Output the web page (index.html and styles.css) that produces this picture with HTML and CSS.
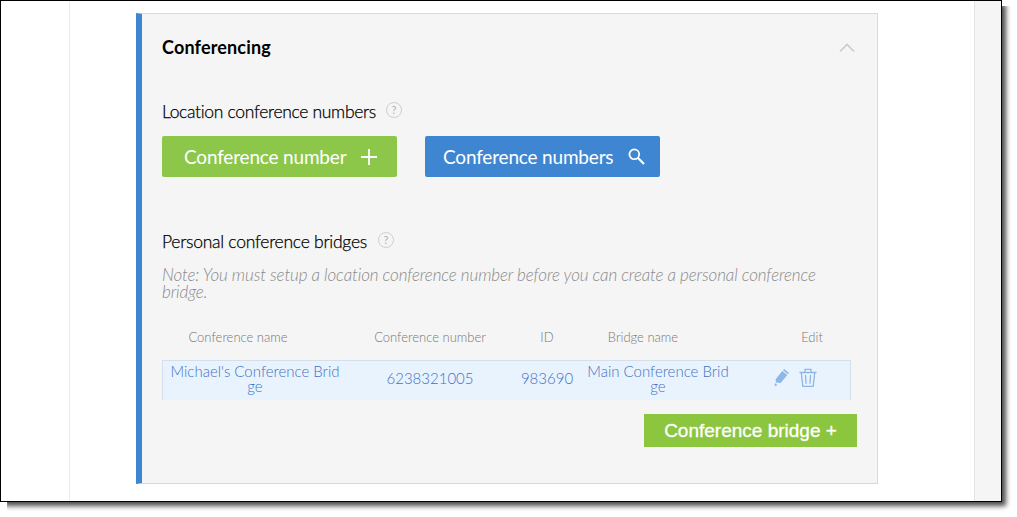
FILE: index.html
```html
<!DOCTYPE html>
<html lang="en">
<head>
<meta charset="utf-8">
<title>Conferencing</title>
<link rel="stylesheet" href="styles.css">
</head>
<body>
<div class="frame">
  <main class="page">
    <section class="card">
      <header class="card-header">
        <h1 class="card-title">Conferencing</h1>
        <svg class="chevron" width="16" height="10" viewBox="0 0 16 10" fill="none" stroke="#cbcbcb" stroke-width="1.6"><path d="M1 8.5 8 1.5 15 8.5"/></svg>
      </header>
      <div class="label-row location-label">
        <h2 class="label">Location conference numbers</h2>
        <span class="help">?</span>
      </div>
      <div class="buttons">
        <button class="btn btn-green"><span class="btn-text">Conference number</span><svg width="16" height="16" viewBox="0 0 16 16" stroke="#fff" stroke-width="1.8"><path d="M8 0V16M0 8H16"/></svg></button>
        <button class="btn btn-blue"><span class="btn-text">Conference numbers</span><svg width="17" height="17" viewBox="0 0 17 17" fill="none" stroke="#fff" stroke-width="1.8"><circle cx="6.3" cy="6.3" r="4.9"/><path d="M9.8 9.8 16 16" stroke-width="2.2"/></svg></button>
      </div>
      <div class="label-row personal-label">
        <h2 class="label">Personal conference bridges</h2>
        <span class="help">?</span>
      </div>
      <p class="note">Note: You must setup a location conference number before you can create a personal conference<br>bridge.</p>
      <div class="row head">
        <span>Conference name</span><span>Conference number</span><span>ID</span><span>Bridge name</span><span>Edit</span>
      </div>
      <div class="row data">
        <span class="name">Michael's Conference Brid<br>ge</span>
        <span class="number">6238321005</span>
        <span class="number">983690</span>
        <span class="name">Main Conference Brid<br>ge</span>
        <span class="actions">
          <svg width="16" height="20" viewBox="0 0 16 20" fill="#8cb7e6"><path d="M9 2.2 10.1.9 15 4.9 14 6.2ZM8.3 3.1 13.3 7.1 6.7 15.1 1.9 14.6 1.6 11.3ZM.5 16.2 1.1 15.3 3.4 17 1 18.2Z"/></svg>
          <svg width="18" height="20" viewBox="0 0 18 20" fill="none" stroke="#8cb7e6" stroke-width="1.3"><path d="M.5 4.5H17.5M6 4.3V1.3H12V4.3M2.3 4.5 3.8 18.3H14.2L15.7 4.5M6.5 7 7 15.8M11.5 7 11 15.8"/></svg>
        </span>
      </div>
      <div class="footer"><button class="bridge-btn">Conference bridge +</button></div>
    </section>
  </main>
</div>
</body>
</html>
```
FILE: styles.css
```css
* { box-sizing: border-box; }
html { background: #fff; }
body { margin: 0; height: 517px; width: 1017px; overflow: clip; font-family: Lato, sans-serif; }
.frame {
  width: 1002px; height: 502px; border: 1px solid #000;
  background: #f5f5f5;
  box-shadow: 4px 4px 5px 0 rgba(0,0,0,.7);
  clip-path: polygon(0 0, 1002px 0, 1002px 6px, 1017px 6px, 1017px 517px, 7px 517px, 7px 502px, 0 502px);
}
.page {
  width: 974px; height: 500px; padding: 12px 0 0 135px;
  background: linear-gradient(#ebebeb, #ebebeb) 68px 0 / 1px 100% no-repeat #fff;
  border-right: 1px solid #e3e3e3;
}
.card {
  width: 742px; height: 471px; background: #f5f5f5;
  border: 1px solid #d9d9d9; border-left: 6px solid #3f86d2;
  padding: 0 20px;
}
.card-header { display: flex; justify-content: space-between; align-items: center; height: 66px; padding-right: 2px; }
.card-title { margin: 0; font-size: 18px; font-weight: 700; line-height: 22px; letter-spacing: .16px; color: #000; }
.chevron { margin-top: 2px; }
.label-row { display: flex; gap: 10px; height: 22px; }
.location-label { margin-top: 21px; }
.label { margin: 0; font-size: 17.5px; font-weight: 300; line-height: 21px; color: #000; -webkit-text-stroke: .25px #000; white-space: nowrap; }
.location-label .label { width: 214px; letter-spacing: -.32px; }
.personal-label .label { width: 206px; letter-spacing: -.26px; }
.help {
  width: 16px; height: 16px; border: 1px solid #cfcfcf; border-radius: 50%;
  font-size: 11px; line-height: 14px; text-align: center; color: #b0b0b0; margin-top: 1px;
}
.buttons { display: flex; gap: 28px; margin-top: 13px; }
.btn {
  width: 235px; height: 41px; border: 0; border-radius: 2px; color: #fff;
  display: flex; align-items: center; font: 400 19px/24px Lato, sans-serif; letter-spacing: -.18px; padding: 0;
}
.btn-green { background: #8cc74a; padding-left: 22px; gap: 15px; }
.btn-blue { background: #3f86d2; padding-left: 18px; gap: 15px; }
.btn-text { white-space: nowrap; }
.personal-label { margin-top: 54px; }
.note { margin: 13px 0 0; font-size: 17px; font-style: italic; font-weight: 300; line-height: 17px; letter-spacing: -.12px; color: #8a8a8a; white-space: nowrap; }
.row { width: 689px; display: grid; grid-template-columns: 186px 164px 70px 152px 117px; align-items: center; text-align: center; font-weight: 300; }
.row span { white-space: nowrap; }
.head { margin-top: 27px; height: 20px; font-size: 13px; color: #777; }
.head span:first-child { padding-right: 34px; }
.head span:nth-child(4) { padding-right: 30px; }
.head span:last-child { padding-left: 39px; }
.data {
  margin-top: 13px; height: 40px; padding-bottom: 3px; font-size: 15px; line-height: 15px; color: #3f72c4;
  background: #e9f3fe; border: 1px solid #d3e0ec; border-bottom: 0;
}
.name { padding-right: 2px; }
.number { padding: 0 2px 2px 0; }
.actions { display: flex; align-items: center; gap: 9px; padding: 0 0 2px 39px; }
.footer { display: flex; justify-content: flex-end; margin-top: 14px; }
.bridge-btn { width: 213px; height: 33px; border: 0; padding: 0; background: #8cc63f; color: #fff; font: 500 19px/24px "Liberation Sans", Arial, sans-serif; -webkit-text-stroke: .3px #fff; }
```
